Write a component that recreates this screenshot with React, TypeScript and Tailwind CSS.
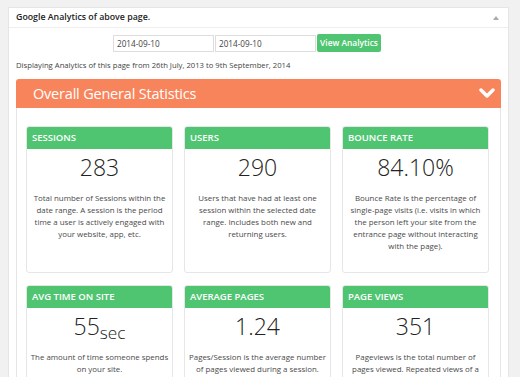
import React from 'react';

type Stat = {
  title: string;
  value: React.ReactNode;
  text: string;
};

const stats: Stat[] = [
  {
    title: 'Sessions',
    value: '283',
    text: 'Total number of Sessions within the date range. A session is the period time a user is actively engaged with your website, app, etc.',
  },
  {
    title: 'Users',
    value: '290',
    text: 'Users that have had at least one session within the selected date range. Includes both new and returning users.',
  },
  {
    title: 'Bounce Rate',
    value: '84.10%',
    text: 'Bounce Rate is the percentage of single-page visits (i.e. visits in which the person left your site from the entrance page without interacting with the page).',
  },
  {
    title: 'Avg Time On Site',
    value: (
      <>
        55<sub>sec</sub>
      </>
    ),
    text: 'The amount of time someone spends on your site.',
  },
  {
    title: 'Average Pages',
    value: '1.24',
    text: 'Pages/Session is the average number of pages viewed during a session. Repeated views of a single page are counted.',
  },
  {
    title: 'Page Views',
    value: '351',
    text: 'Pageviews is the total number of pages viewed. Repeated views of a single page are counted.',
  },
];

function StatCard({ stat }: { stat: Stat }) {
  return (
    <div className="h-[147px] overflow-hidden rounded-[3px] border border-[#e6e6e6] bg-white">
      <div className="h-[22px] bg-[#4fc571] pl-[5px] text-[9.5px] font-semibold uppercase leading-[22px] text-white">
        {stat.title}
      </div>
      <div className="pt-[5px] text-center text-[23px] font-light leading-[27px] text-[#222]">{stat.value}</div>
      <p className="mt-[11px] px-[2px] text-center text-[7.9px] leading-[12px] text-[#4a4a4a]">{stat.text}</p>
    </div>
  );
}

export default function App() {
  return (
    <div className="h-[377px] overflow-hidden bg-[#f1f1f1] pt-[7px] pl-[8px] font-['Open_Sans',sans-serif]">
      <div className="w-[501px] border border-[#e5e5e5] bg-white">
        <div className="flex h-[20px] items-center justify-between border-b border-[#eeeeee] pl-[7px] pr-[9px]">
          <h3 className="text-[8.8px] font-semibold text-[#222]">Google Analytics of above page.</h3>
          <span className="h-0 w-0 border-x-[3px] border-b-[4px] border-x-transparent border-b-[#aaa]" />
        </div>

        <div className="pl-[7px] pr-[7px]">
          <div className="mt-[6px] flex items-center pl-[97px]">
            <input
              type="text"
              defaultValue="2014-09-10"
              className="h-[17px] w-[101px] border border-[#dddddd] px-[3px] text-[8.2px] text-[#444] outline-none"
            />
            <input
              type="text"
              defaultValue="2014-09-10"
              className="ml-[1px] h-[17px] w-[101px] border border-[#dddddd] px-[3px] text-[8.2px] text-[#444] outline-none"
            />
            <button
              type="button"
              className="ml-[1px] h-[18px] w-[64px] whitespace-nowrap rounded-[2px] bg-[#4fc571] text-[8.4px] font-semibold text-white"
            >
              View Analytics
            </button>
          </div>

          <p className="mt-[6px] text-[7.7px] leading-[14px] text-[#444]">
            Displaying Analytics of this page from 26th July, 2013 to 9th September, 2014
          </p>

          <div className="mt-[7px] w-[485px]">
            <div className="flex h-[29px] items-center justify-between rounded-t-[3px] bg-[#f8845c] pl-[17px] pr-[6px]">
              <span className="text-[14.5px] tracking-[-0.2px] text-white">Overall General Statistics</span>
              <svg width="16" height="11" viewBox="0 0 16 11" fill="none">
                <path d="M2 2l6 6 6-6" stroke="white" strokeWidth="3.5" strokeLinecap="round" strokeLinejoin="round" />
              </svg>
            </div>
            <div className="border-x border-[#e5e5e5] pt-[18px] pl-[9px] pb-[20px]">
              <div className="grid grid-cols-[147px_147px_147px] gap-x-[11px] gap-y-[12px]">
                {stats.map((s) => (
                  <StatCard key={s.title} stat={s} />
                ))}
              </div>
            </div>
          </div>
        </div>
      </div>
    </div>
  );
}
